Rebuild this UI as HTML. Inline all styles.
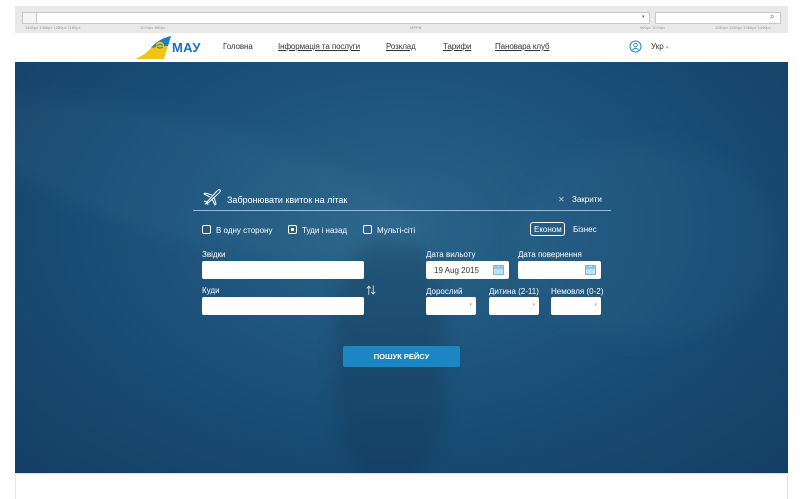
<!DOCTYPE html>
<html><head><meta charset="utf-8"><style>
*{margin:0;padding:0;box-sizing:border-box}
body{width:800px;height:499px;background:#fff;font-family:"Liberation Sans","Noto Sans CJK SC",sans-serif;position:relative;overflow:hidden}
.chrome{position:absolute;left:15px;top:6px;width:773px;height:27px;background:#e9e9e9}
.url{position:absolute;left:22px;top:12px;width:628px;height:12px;background:#fff;border:1px solid #c8c8c8}
.srch{position:absolute;left:655px;top:12px;width:126px;height:12px;background:#fff;border:1px solid #c8c8c8}
.ruler{position:absolute;left:15px;top:25px;width:773px;height:7px;font-size:4px;color:#999}
.nav{position:absolute;left:15px;top:33px;width:773px;height:29px;background:#fff}
.nav a{position:absolute;top:9px;font-size:8px;color:#333;text-decoration:underline;letter-spacing:-0.1px}
.hero{position:absolute;left:15px;top:62px;width:773px;height:411px;overflow:hidden;
background:radial-gradient(ellipse at 50% 40%,#2a6489 0%,#1f567d 35%,#184a72 65%,#133f66 100%)}
.w{color:#fff;position:absolute;font-size:8px}
.inp{position:absolute;background:#fff;border-radius:2px}
.cb{position:absolute;width:9px;height:9px;border:1.3px solid #fff;border-radius:2px}
.sel:after{content:"▾";position:absolute;right:4px;top:5px;font-size:5px;color:#aaa}
</style></head><body>
<div class="chrome"></div>
<div class="url"></div><div style="position:absolute;left:22px;top:12px;width:15px;height:12px;background:#f4f4f4;border:1px solid #c8c8c8"></div>
<div style="position:absolute;left:642px;top:14px;font-size:5px;color:#666">▾</div>
<div class="srch"></div><div style="position:absolute;left:770px;top:12px;font-size:8px;color:#2a6bb0">⌕</div>
<div class="ruler"><span style="position:absolute;left:10px">1440px 1366px 1280px 1180px</span><span style="position:absolute;left:125px">1024px 960px</span><span style="position:absolute;left:395px">MPPB</span><span style="position:absolute;left:625px">960px 1024px</span><span style="position:absolute;left:700px">1180px 1280px 1366px 1440px</span></div>
<div class="nav">
<svg style="position:absolute;left:119px;top:2px" width="40" height="25" viewBox="0 0 40 25"><path d="M1 24 L30 24 L37 1 Q26 3 18 12 Q10 21 1 24Z" fill="#f2c417"/><path d="M17 13 Q24 4 37 1 L34 11 Q26 11 17 13Z" fill="#1c7fc1"/><circle cx="26" cy="11" r="4.2" fill="#f2c417"/><path d="M23 10.5 Q26 8.5 29 10.5 M23 12 Q26 14 29 12" stroke="#1c7fc1" stroke-width="0.9" fill="none"/></svg>
<div style="position:absolute;left:157px;top:7px;font-size:13px;font-weight:bold;color:#1c6fb8;letter-spacing:0.3px">МАУ</div>
<a style="left:208px;text-decoration:none">Головна</a>
<a style="left:263px">Інформація та послуги</a>
<a style="left:371px">Розклад</a>
<a style="left:428px">Тарифи</a>
<a style="left:480px">Панова­ра клуб</a>
<svg style="position:absolute;left:614px;top:7px" width="13" height="13" viewBox="0 0 13 13"><circle cx="6.5" cy="6.5" r="5.5" fill="none" stroke="#2a86c8" stroke-width="1"/><circle cx="6.5" cy="5" r="1.8" fill="none" stroke="#2a86c8" stroke-width="0.9"/><path d="M3.5 10 Q6.5 6.5 9.5 10" fill="none" stroke="#2a86c8" stroke-width="0.9"/></svg>
<div style="position:absolute;left:636px;top:9px;font-size:8px;color:#333">Укр <span style="font-size:5px;color:#999">▾</span></div>
</div>
<div class="hero">
<div style="position:absolute;left:-50px;top:60px;width:460px;height:120px;background:rgba(120,170,200,0.06);border-radius:50%;transform:rotate(15deg);filter:blur(8px)"></div>
<div style="position:absolute;left:320px;top:180px;width:110px;height:240px;background:rgba(10,35,60,0.2);border-radius:40%;filter:blur(8px)"></div>
<div style="position:absolute;left:500px;top:80px;width:260px;height:200px;background:rgba(100,160,190,0.06);border-radius:50%;filter:blur(10px)"></div>
</div>
<!-- form -->
<svg style="position:absolute;left:202px;top:187px" width="20" height="20" viewBox="0 0 20 20" fill="none" stroke="#fff" stroke-width="1"><path d="M3 17 L5 15 L15 4 Q17 2 18 3 Q19 4 17 6 L6 16 Z"/><path d="M10 8 L3 6 L2 7 L8 10 M12 10 L14 17 L13 18 L10 12"/><path d="M5 15 L2 14 M5 15 L6 18"/></svg>
<div class="w" style="left:227px;top:195px;font-size:9px">Забронювати квиток на літак</div>
<div class="w" style="left:558px;top:195px;font-size:8px;color:#ccd">✕</div>
<div class="w" style="left:572px;top:195px">Закрити</div>
<div style="position:absolute;left:193px;top:210px;width:418px;height:1px;background:#9dbbd0"></div>
<div class="cb" style="left:202px;top:225px"></div><div class="w" style="left:216px;top:226px">В одну сторону</div>
<div class="cb" style="left:288px;top:225px"></div><div style="position:absolute;left:291px;top:228px;width:3px;height:3px;background:#fff"></div><div class="w" style="left:302px;top:226px">Туди і назад</div>
<div class="cb" style="left:363px;top:225px"></div><div class="w" style="left:377px;top:226px">Мульті-сіті</div>
<div style="position:absolute;left:530px;top:222px;width:35px;height:14px;border:1.3px solid #fff;border-radius:3px"></div>
<div class="w" style="left:534px;top:225px">Економ</div>
<div class="w" style="left:573px;top:225px">Бізнес</div>
<div class="w" style="left:202px;top:250px">Звідки</div>
<div class="inp" style="left:202px;top:261px;width:162px;height:18px"></div>
<div class="w" style="left:202px;top:286px">Куди</div>
<div class="inp" style="left:202px;top:297px;width:162px;height:18px"></div>
<div class="w" style="left:366px;top:282px;font-size:10px">⇅</div>
<div class="w" style="left:426px;top:250px">Дата вильоту</div>
<div class="inp" style="left:426px;top:261px;width:83px;height:18px"><span style="position:absolute;left:8px;top:5px;font-size:8px;color:#333">19 Aug 2015</span></div>
<div class="w" style="left:518px;top:250px">Дата повернення</div>
<div class="inp" style="left:518px;top:261px;width:83px;height:18px"></div>
<svg style="position:absolute;left:493px;top:264px" width="11" height="11" viewBox="0 0 11 11"><rect x="0.5" y="1.5" width="10" height="9" fill="#bfe0f2" stroke="#7bbbe0"/><path d="M0.5 4h10M3 1v2M8 1v2" stroke="#5aa8d8"/></svg>
<svg style="position:absolute;left:585px;top:264px" width="11" height="11" viewBox="0 0 11 11"><rect x="0.5" y="1.5" width="10" height="9" fill="#bfe0f2" stroke="#7bbbe0"/><path d="M0.5 4h10M3 1v2M8 1v2" stroke="#5aa8d8"/></svg>
<div class="w" style="left:426px;top:287px">Дорослий</div>
<div class="w" style="left:489px;top:287px">Дитина (2-11)</div>
<div class="w" style="left:551px;top:287px">Немовля (0-2)</div>
<div class="inp sel" style="left:426px;top:297px;width:50px;height:18px"></div>
<div class="inp sel" style="left:489px;top:297px;width:50px;height:18px"></div>
<div class="inp sel" style="left:551px;top:297px;width:50px;height:18px"></div>
<div style="position:absolute;left:343px;top:346px;width:117px;height:21px;background:#1a86c4;border-radius:2px;color:#fff;font-size:7.5px;font-weight:bold;text-align:center;line-height:21px">ПОШУК РЕЙСУ</div>
<div style="position:absolute;left:15px;top:473px;width:773px;height:26px;background:#fff;border-left:1px solid #e4e4e4;border-right:1px solid #e4e4e4;border-top:1px solid #cfe0ea"></div>
</body></html>
